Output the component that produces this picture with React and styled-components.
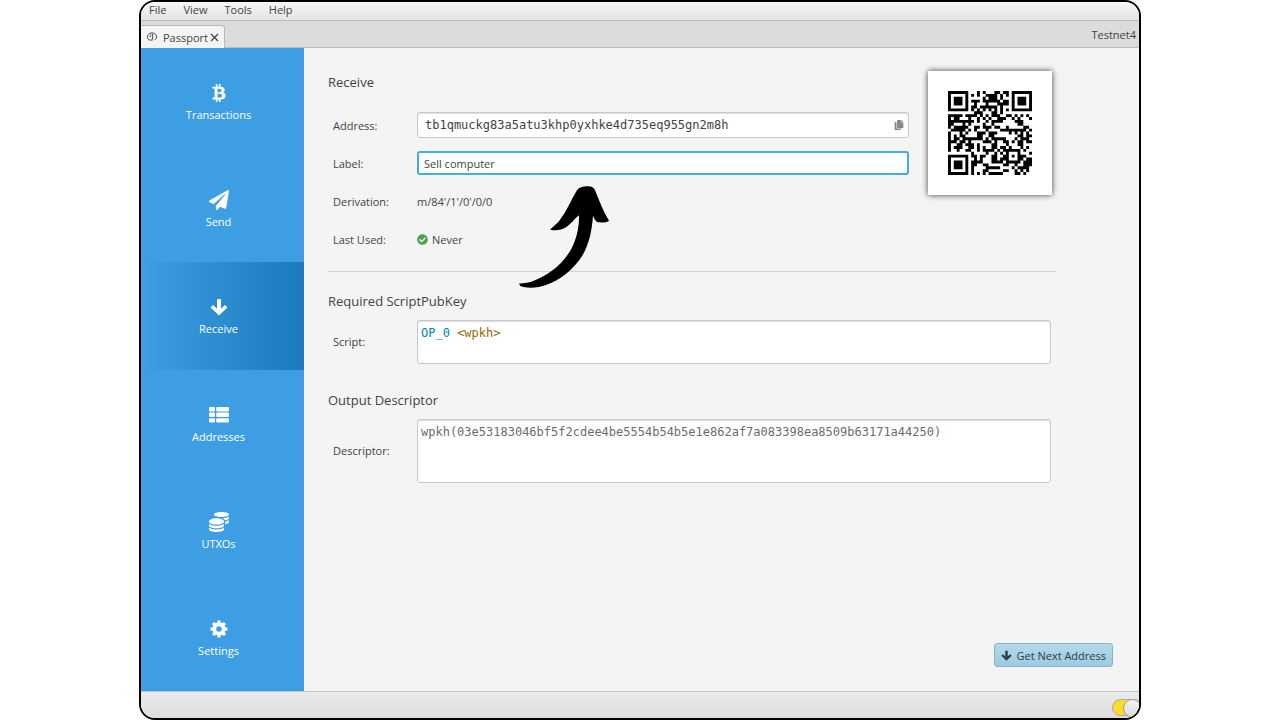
import React from 'react';
import styled, { createGlobalStyle } from 'styled-components'
import {
    FaBtc,
    FaCheckCircle,
    FaCoins,
    FaCopy,
    FaPaperPlane,
} from 'react-icons/fa';

const GlobalStyle = createGlobalStyle`
    * {
        box-sizing: border-box;
    }

    body {
        margin: 0;
        background: white;
        color: #434343;
        font-family: 'Open Sans', 'Noto Sans', sans-serif;
        font-size: 11px;
    }

    button, input, textarea, output {
        font-family: inherit;
        font-size: inherit;
        color: inherit;
    }
`

const mono = `'DejaVu Sans Mono', 'Liberation Mono', monospace`

const StyledWindow = styled.div`
    display: flex;
    flex-direction: column;
    max-width: 1002px;
    min-height: 100vh;
    margin: 0 auto;
    border: 2px solid black;
    border-radius: 16px;
    overflow: hidden;
    background: #f4f4f4;
`
const StyledMenuBar = styled.nav`
    display: flex;
    gap: 17px;
    height: 19px;
    padding: 0 8px;
    background: linear-gradient(#f6f6f6, #e4e4e4);
    border-bottom: 1px solid #bcbcbc;
`
const StyledMenuButton = styled.button`
    display: flex;
    align-items: center;
    height: 14px;
    padding: 0;
    border: none;
    background: none;
`
const StyledTabBar = styled.div`
    display: flex;
    align-items: flex-end;
    justify-content: space-between;
    height: 27px;
    background: #dcdcdc;
    border-bottom: 1px solid #bdbdbd;
`
const StyledTab = styled.div`
    display: flex;
    align-items: center;
    gap: 5px;
    height: 23px;
    margin-bottom: -1px;
    padding: 0 5px 0 5px;
    background: #f4f4f4;
    border: 1px solid #b8b8b8;
    border-width: 1px 1px 0 0;
    border-radius: 0 3px 0 0;
`
const StyledTabClose = styled.button`
    display: flex;
    margin-left: -3px;
    padding: 0;
    border: none;
    background: none;
`
const StyledNetwork = styled.span`
    padding: 0 3px 5px;
`
const StyledBody = styled.div`
    display: flex;
    flex: 1;
`
const StyledSidebar = styled.nav`
    display: flex;
    flex-direction: column;
    width: 163px;
    background: #3d9ee3;
`
const StyledNavItem = styled.button`
    display: flex;
    flex: 1;
    flex-direction: column;
    align-items: center;
    justify-content: center;
    gap: 4px;
    padding: 2px 8px 0 0;
    border: none;
    color: white;
    background: ${props => props.$active ? 'linear-gradient(to right, #3d9ee3, #1b7abc)' : 'transparent'};
`
const StyledNavIcon = styled.span`
    display: flex;
    align-items: center;
    height: 20px;
    font-size: ${props => props.$size}px;
`
const StyledMain = styled.main`
    display: flex;
    flex: 1;
    flex-direction: column;
    padding: 20px 26px 24px 24px;
`
const StyledForm = styled.form`
    position: relative;
    margin-right: 57px;
`
const StyledTop = styled.div`
    display: flex;
    gap: 19px;
    padding: 0 4px 13px 0;
    border-bottom: 1px solid #d0d0d0;
`
const StyledFields = styled.section`
    flex: 1;
`
const StyledSection = styled.section`
    padding: ${props => props.$gap}px 5px 0 0;
`
const StyledHeading = styled.h2`
    margin: 0;
    font-size: 13px;
    font-weight: 400;
    line-height: 28px;
`
const StyledRows = styled.div`
    padding: 10px 0 0 5px;
`
const StyledRow = styled.div`
    display: grid;
    grid-template-columns: 84px 1fr;
    align-items: center;
    min-height: 38px;
`
const StyledAreaRow = styled(StyledRow)`
    padding: 5px 0 0 5px;

    label {
        line-height: 16px;
    }
`
const StyledInput = styled.input`
    width: 100%;
    height: 24px;
    padding: 0 5px;
    border: 2px solid #3fb0d8;
    border-radius: 3px;
    background: white;
    outline: none;
`
const StyledAddressBox = styled.div`
    display: flex;
    align-items: center;
    height: 26px;
    padding: 0 4px 0 7px;
    border: 1px solid #c8c8c8;
    border-radius: 3px;
    background: white;
    box-shadow: inset 0 1px 1px #dedede;
`
const StyledAddressInput = styled.input`
    flex: 1;
    min-width: 0;
    padding: 0;
    border: none;
    outline: none;
    background: none;
    font-family: ${mono};
    font-size: 12px;
`
const StyledCopyButton = styled.button`
    display: flex;
    padding: 0;
    border: none;
    background: none;
    color: #858585;
    font-size: 10px;
`
const StyledOutput = styled.output`
    display: flex;
    align-items: center;
    gap: 4px;

    svg {
        color: #50a14f;
    }
`
const StyledScript = styled.output`
    display: block;
    height: 44px;
    padding: 4px 3px;
    border: 1px solid #c8c8c8;
    border-radius: 3px;
    background: white;
    box-shadow: inset 0 1px 1px #dedede;
    font-family: ${mono};
    font-size: 12px;
    line-height: 16px;
`
const StyledOpcode = styled.span`
    color: #0184bc;
`
const StyledHash = styled.span`
    color: #986801;
`
const StyledDescriptor = styled.textarea`
    display: block;
    width: 100%;
    height: 64px;
    padding: 4px 3px;
    border: 1px solid #c8c8c8;
    border-radius: 3px;
    background: white;
    box-shadow: inset 0 1px 1px #dedede;
    outline: none;
    resize: none;
    color: #696c77;
    font-family: ${mono};
    font-size: 12px;
    line-height: 16px;
`
const StyledQrCard = styled.div`
    align-self: flex-start;
    width: 124px;
    height: 124px;
    margin-top: 3px;
    padding: 20px;
    background: white;
    box-shadow: 0 0 6px rgba(0, 0, 0, 0.75);

    svg {
        display: block;
        width: 100%;
        height: 100%;
    }
`
const StyledArrow = styled.svg`
    position: absolute;
    top: 118px;
    left: 191px;
    width: 90px;
    height: 102px;
`
const StyledFooter = styled.footer`
    display: flex;
    justify-content: flex-end;
    margin-top: auto;
`
const StyledButton = styled.button`
    display: flex;
    align-items: center;
    gap: 4px;
    height: 24px;
    padding: 0 6px;
    border: 1px solid #86b4c8;
    border-radius: 3px;
    background: linear-gradient(#b4d9ea, #9bcbe1);
    color: #2f3d44;
`
const StyledStatusBar = styled.div`
    display: flex;
    align-items: center;
    justify-content: flex-end;
    height: 27px;
    padding-top: 4px;
    background: linear-gradient(#ebebeb, #dedede);
    border-top: 1px solid #c4c4c4;
`
const StyledSwitch = styled.input`
    appearance: none;
    width: 30px;
    height: 17px;
    margin: 0 -3px 0 0;
    border: 1px solid #a9a9a9;
    border-radius: 9px;
    background: #fbdc2c;

    &::after {
        content: '';
        display: block;
        width: 17px;
        height: 17px;
        margin: -1px -1px 0 auto;
        border: 1px solid #a0a0a0;
        border-radius: 50%;
        background: linear-gradient(#f2f2f2, #dcdcdc);
    }
`

const ArrowDownIcon = () => (
    <svg width='1em' height='1em' viewBox='0 0 18 18' fill='none' stroke='currentColor'>
        <path d='M9 1.2v11' strokeWidth='4' />
        <path d='M1.8 8.2L9 15l7.2-6.8' strokeWidth='3.6' />
    </svg>
)

const ListIcon = () => (
    <svg width='1em' height='1em' viewBox='0 0 20 20' fill='currentColor'>
        {[2, 7.6, 13.2].map(y => (
            <React.Fragment key={y}>
                <rect x='0' y={y} width='6' height='4.4' rx='1' />
                <rect x='7.2' y={y} width='12.8' height='4.4' rx='1' />
            </React.Fragment>
        ))}
    </svg>
)

const CogIcon = () => (
    <svg width='1em' height='1em' viewBox='0 0 18 18' fill='currentColor'>
        <circle cx='9' cy='9' r='4.6' fill='none' stroke='currentColor' strokeWidth='3.6' />
        {[0, 45, 90, 135, 180, 225, 270, 315].map(angle => (
            <path key={angle} d='M7 3.6L7.5 .6h3L11 3.6z' transform={`rotate(${angle} 9 9)`} />
        ))}
    </svg>
)

const ADDRESS = 'tb1qmuckg83a5atu3khp0yxhke4d735eq955gn2m8h';
const DESCRIPTOR = 'wpkh(03e53183046bf5f2cdee4be5554b54b5e1e862af7a083398ea8509b63171a44250)';

const navItems = [
    { name: 'Transactions', Icon: FaBtc, size: 18 },
    { name: 'Send', Icon: FaPaperPlane, size: 20 },
    { name: 'Receive', Icon: ArrowDownIcon, size: 18 },
    { name: 'Addresses', Icon: ListIcon, size: 20 },
    { name: 'UTXOs', Icon: FaCoins, size: 20 },
    { name: 'Settings', Icon: CogIcon, size: 18 },
];

// QR version 3, error correction level L
const QR_SIZE = 29;
const QR_DATA = 55;
const QR_EC = 15;
const QR_MASK = 2;

const gfMultiply = (a, b) => {
    let result = 0;
    for (let i = 7; i >= 0; i--) {
        result = (result << 1) ^ ((result >>> 7) * 0x11d);
        result ^= ((b >>> i) & 1) * a;
    }
    return result;
}

const getCodewords = text => {
    let bits = '0100' + text.length.toString(2).padStart(8, '0');
    for (const char of text) {
        bits += char.charCodeAt(0).toString(2).padStart(8, '0');
    }
    bits += '0000';
    const data = bits.match(/.{8}/g).map(byte => parseInt(byte, 2));
    for (let pad = 0xec; data.length < QR_DATA; pad ^= 0xec ^ 0x11) {
        data.push(pad);
    }

    const divisor = new Array(QR_EC).fill(0);
    divisor[QR_EC - 1] = 1;
    let root = 1;
    for (let i = 0; i < QR_EC; i++) {
        for (let j = 0; j < QR_EC; j++) {
            divisor[j] = gfMultiply(divisor[j], root);
            if (j + 1 < QR_EC) {
                divisor[j] ^= divisor[j + 1];
            }
        }
        root = gfMultiply(root, 2);
    }

    const remainder = new Array(QR_EC).fill(0);
    data.forEach(byte => {
        const factor = byte ^ remainder.shift();
        remainder.push(0);
        divisor.forEach((value, i) => {
            remainder[i] ^= gfMultiply(value, factor);
        });
    });
    return [...data, ...remainder];
}

const getModules = text => {
    const grid = Array.from({ length: QR_SIZE }, () => new Array(QR_SIZE).fill(null));
    const set = (x, y, dark) => {
        if (x >= 0 && y >= 0 && x < QR_SIZE && y < QR_SIZE) {
            grid[y][x] = Boolean(dark);
        }
    };

    for (let i = 0; i < QR_SIZE; i++) {
        set(6, i, i % 2 === 0);
        set(i, 6, i % 2 === 0);
    }
    [[3, 3], [QR_SIZE - 4, 3], [3, QR_SIZE - 4]].forEach(([cx, cy]) => {
        for (let dy = -4; dy <= 4; dy++) {
            for (let dx = -4; dx <= 4; dx++) {
                const ring = Math.max(Math.abs(dx), Math.abs(dy));
                set(cx + dx, cy + dy, ring !== 2 && ring !== 4);
            }
        }
    });
    for (let dy = -2; dy <= 2; dy++) {
        for (let dx = -2; dx <= 2; dx++) {
            set(22 + dx, 22 + dy, Math.max(Math.abs(dx), Math.abs(dy)) !== 1);
        }
    }

    const format = (1 << 3) | QR_MASK;
    let rest = format;
    for (let i = 0; i < 10; i++) {
        rest = (rest << 1) ^ ((rest >>> 9) * 0x537);
    }
    const formatBits = ((format << 10) | rest) ^ 0x5412;
    const bit = i => (formatBits >>> i) & 1;
    for (let i = 0; i < 6; i++) {
        set(8, i, bit(i));
    }
    set(8, 7, bit(6));
    set(8, 8, bit(7));
    set(7, 8, bit(8));
    for (let i = 9; i < 15; i++) {
        set(14 - i, 8, bit(i));
    }
    for (let i = 0; i < 8; i++) {
        set(QR_SIZE - 1 - i, 8, bit(i));
    }
    for (let i = 8; i < 15; i++) {
        set(8, QR_SIZE - 15 + i, bit(i));
    }
    set(8, QR_SIZE - 8, true);

    const codewords = getCodewords(text);
    let index = 0;
    for (let right = QR_SIZE - 1; right >= 1; right -= 2) {
        if (right === 6) {
            right = 5;
        }
        const upward = ((right + 1) & 2) === 0;
        for (let step = 0; step < QR_SIZE; step++) {
            const y = upward ? QR_SIZE - 1 - step : step;
            for (let x = right; x > right - 2; x--) {
                if (grid[y][x] === null) {
                    const dark = (codewords[index >>> 3] >>> (7 - (index & 7))) & 1;
                    set(x, y, dark ^ (x % 3 === 0 ? 1 : 0));
                    index++;
                }
            }
        }
    }
    return grid;
}

const QrCode = ({ value }) => {
    let path = '';
    getModules(value).forEach((row, y) => {
        row.forEach((dark, x) => {
            if (dark) {
                path += `M${x} ${y}h1v1h-1z`;
            }
        });
    });
    return (
        <StyledQrCard>
            <svg viewBox={`0 0 ${QR_SIZE} ${QR_SIZE}`} role='img' aria-label='Address QR code'>
                <path d={path} fill='black' />
            </svg>
        </StyledQrCard>
    )
}

const WalletIcon = () => (
    <svg width='12' height='12' viewBox='0 0 12 12' fill='none' stroke='#4a4a4a'>
        <path d='M3.4 9A4.6 3.9 0 1 1 9 8.8' />
        <path d='M6.6 3v5.4M5.2 3.6L3.8 6' />
        <path d='M3.2 9h3.6' strokeWidth='1.2' />
    </svg>
)

const CloseIcon = () => (
    <svg width='9' height='9' viewBox='0 0 9 9' stroke='#444' strokeWidth='1.3'>
        <path d='M1 1l7 7M8 1l-7 7' />
    </svg>
)

const App = () => {
    const [active, setActive] = React.useState('Receive');
    const [label, setLabel] = React.useState('Sell computer');

    return (
        <>
            <GlobalStyle />
            <StyledWindow>
                <StyledMenuBar>
                    {['File', 'View', 'Tools', 'Help'].map(name => (
                        <StyledMenuButton key={name}>{name}</StyledMenuButton>
                    ))}
                </StyledMenuBar>
                <StyledTabBar>
                    <StyledTab>
                        <WalletIcon />
                        Passport
                        <StyledTabClose aria-label='Close tab'><CloseIcon /></StyledTabClose>
                    </StyledTab>
                    <StyledNetwork>Testnet4</StyledNetwork>
                </StyledTabBar>
                <StyledBody>
                    <StyledSidebar>
                        {navItems.map(({ name, Icon, size }) => (
                            <StyledNavItem
                                key={name}
                                $active={name === active}
                                onClick={() => setActive(name)}>
                                    <StyledNavIcon $size={size}><Icon /></StyledNavIcon>
                                    {name}
                            </StyledNavItem>
                        ))}
                    </StyledSidebar>
                    <StyledMain>
                        <StyledForm>
                            <StyledTop>
                                <StyledFields>
                                    <StyledHeading>Receive</StyledHeading>
                                    <StyledRows>
                                        <StyledRow>
                                            <label htmlFor='address'>Address:</label>
                                            <StyledAddressBox>
                                                <StyledAddressInput id='address' type='text' value={ADDRESS} readOnly />
                                                <StyledCopyButton type='button' aria-label='Copy address'>
                                                    <FaCopy />
                                                </StyledCopyButton>
                                            </StyledAddressBox>
                                        </StyledRow>
                                        <StyledRow>
                                            <label htmlFor='label'>Label:</label>
                                            <StyledInput
                                                id='label'
                                                type='text'
                                                value={label}
                                                onChange={ev => setLabel(ev.target.value)}
                                            />
                                        </StyledRow>
                                        <StyledRow>
                                            <label htmlFor='derivation'>Derivation:</label>
                                            <StyledOutput id='derivation'>m/84'/1'/0'/0/0</StyledOutput>
                                        </StyledRow>
                                        <StyledRow>
                                            <label htmlFor='last-used'>Last Used:</label>
                                            <StyledOutput id='last-used'><FaCheckCircle />Never</StyledOutput>
                                        </StyledRow>
                                    </StyledRows>
                                </StyledFields>
                                <QrCode value={ADDRESS} />
                            </StyledTop>
                            <StyledSection $gap={15}>
                                <StyledHeading>Required ScriptPubKey</StyledHeading>
                                <StyledAreaRow>
                                    <label htmlFor='script'>Script:</label>
                                    <StyledScript id='script'>
                                        <StyledOpcode>OP_0</StyledOpcode> <StyledHash>&lt;wpkh&gt;</StyledHash>
                                    </StyledScript>
                                </StyledAreaRow>
                            </StyledSection>
                            <StyledSection $gap={22}>
                                <StyledHeading>Output Descriptor</StyledHeading>
                                <StyledAreaRow>
                                    <label htmlFor='descriptor'>Descriptor:</label>
                                    <StyledDescriptor id='descriptor' value={DESCRIPTOR} readOnly />
                                </StyledAreaRow>
                            </StyledSection>
                            <StyledArrow viewBox='327 18 270 306' aria-hidden='true'>
                                <path d='M327 311C340 309 352 309 362 306C420 285 460 250 485 205C500 175 508 140 507 106C495 115 485 130 468 142C455 151 435 153 421 149C425 142 438 134 448 122C470 95 483 60 501 31C507 22 520 19 533 19C545 19 551 22 555 31C567 60 580 95 597 122C590 128 575 128 563 127C555 122 552 114 549 107C546 150 538 190 518 225C490 270 450 300 410 314C385 324 350 326 331 318Z' />
                            </StyledArrow>
                        </StyledForm>
                        <StyledFooter>
                            <StyledButton type='button'><ArrowDownIcon />Get Next Address</StyledButton>
                        </StyledFooter>
                    </StyledMain>
                </StyledBody>
                <StyledStatusBar>
                    <StyledSwitch type='checkbox' role='switch' aria-label='Server connection' defaultChecked />
                </StyledStatusBar>
            </StyledWindow>
        </>
    )
}


export default App;
